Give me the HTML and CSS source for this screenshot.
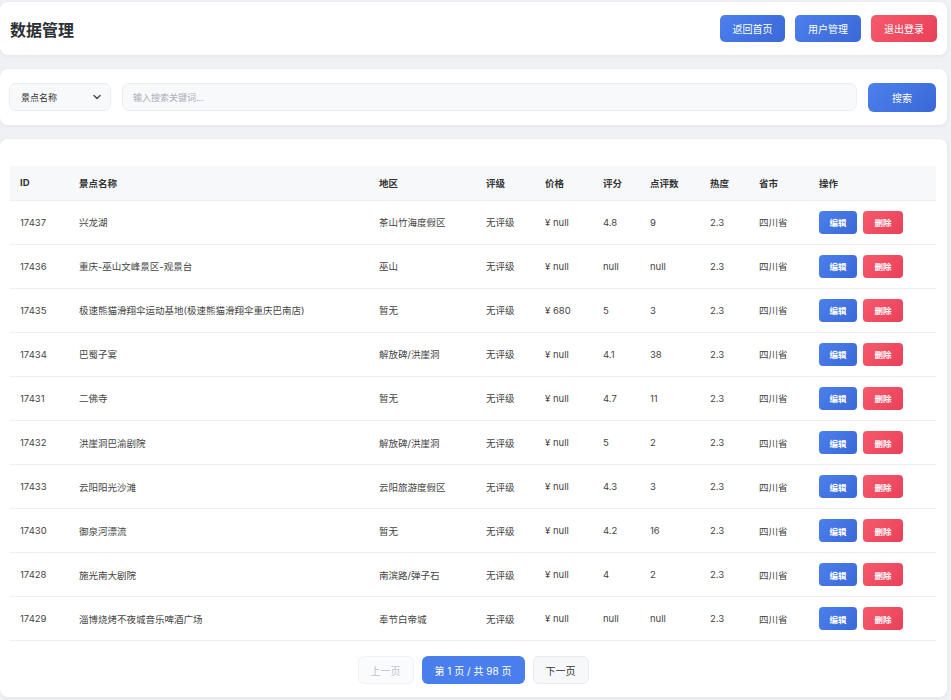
FILE: index.html
```html
<!DOCTYPE html>
<html lang="zh-CN">
<head>
<meta charset="utf-8">
<title>数据管理</title>
<link rel="stylesheet" href="styles.css">
</head>
<body>
<div class="page">
  <header class="card header">
    <h1 class="title">数据管理</h1>
    <div class="actions">
      <button class="btn btn-blue">返回首页</button>
      <button class="btn btn-blue btn-wide">用户管理</button>
      <button class="btn btn-red">退出登录</button>
    </div>
  </header>

  <section class="card search">
    <div class="select">
      <span>景点名称</span>
      <svg width="10" height="10" viewBox="0 0 10 10"><path d="M2 3.5 L5 6.5 L8 3.5" fill="none" stroke="#444" stroke-width="1.3" stroke-linecap="round" stroke-linejoin="round"/></svg>
    </div>
    <div class="input">输入搜索关键词...</div>
    <button class="btn btn-blue btn-search">搜索</button>
  </section>

  <section class="card tablecard">
    <table class="grid">
      <colgroup>
        <col style="width:59px"><col style="width:300px"><col style="width:107px"><col style="width:59px"><col style="width:58px"><col style="width:47px"><col style="width:60px"><col style="width:49px"><col style="width:60px"><col style="width:127px">
      </colgroup>
      <thead>
        <tr><th>ID</th><th>景点名称</th><th>地区</th><th>评级</th><th>价格</th><th>评分</th><th>点评数</th><th>热度</th><th>省市</th><th>操作</th></tr>
      </thead>
      <tbody>
        <tr><td>17437</td><td>兴龙湖</td><td>茶山竹海度假区</td><td>无评级</td><td>¥ null</td><td>4.8</td><td>9</td><td>2.3</td><td>四川省</td><td><span class="ops"><button class="sbtn sbtn-blue">编辑</button><button class="sbtn sbtn-red">删除</button></span></td></tr>
        <tr><td>17436</td><td>重庆-巫山文峰景区-观景台</td><td>巫山</td><td>无评级</td><td>¥ null</td><td>null</td><td>null</td><td>2.3</td><td>四川省</td><td><span class="ops"><button class="sbtn sbtn-blue">编辑</button><button class="sbtn sbtn-red">删除</button></span></td></tr>
        <tr><td>17435</td><td>极速熊猫滑翔伞运动基地(极速熊猫滑翔伞重庆巴南店)</td><td>暂无</td><td>无评级</td><td>¥ 680</td><td>5</td><td>3</td><td>2.3</td><td>四川省</td><td><span class="ops"><button class="sbtn sbtn-blue">编辑</button><button class="sbtn sbtn-red">删除</button></span></td></tr>
        <tr><td>17434</td><td>巴蜀子宴</td><td>解放碑/洪崖洞</td><td>无评级</td><td>¥ null</td><td>4.1</td><td>38</td><td>2.3</td><td>四川省</td><td><span class="ops"><button class="sbtn sbtn-blue">编辑</button><button class="sbtn sbtn-red">删除</button></span></td></tr>
        <tr><td>17431</td><td>二佛寺</td><td>暂无</td><td>无评级</td><td>¥ null</td><td>4.7</td><td>11</td><td>2.3</td><td>四川省</td><td><span class="ops"><button class="sbtn sbtn-blue">编辑</button><button class="sbtn sbtn-red">删除</button></span></td></tr>
        <tr><td>17432</td><td>洪崖洞巴渝剧院</td><td>解放碑/洪崖洞</td><td>无评级</td><td>¥ null</td><td>5</td><td>2</td><td>2.3</td><td>四川省</td><td><span class="ops"><button class="sbtn sbtn-blue">编辑</button><button class="sbtn sbtn-red">删除</button></span></td></tr>
        <tr><td>17433</td><td>云阳阳光沙滩</td><td>云阳旅游度假区</td><td>无评级</td><td>¥ null</td><td>4.3</td><td>3</td><td>2.3</td><td>四川省</td><td><span class="ops"><button class="sbtn sbtn-blue">编辑</button><button class="sbtn sbtn-red">删除</button></span></td></tr>
        <tr><td>17430</td><td>御泉河漂流</td><td>暂无</td><td>无评级</td><td>¥ null</td><td>4.2</td><td>16</td><td>2.3</td><td>四川省</td><td><span class="ops"><button class="sbtn sbtn-blue">编辑</button><button class="sbtn sbtn-red">删除</button></span></td></tr>
        <tr><td>17428</td><td>施光南大剧院</td><td>南滨路/弹子石</td><td>无评级</td><td>¥ null</td><td>4</td><td>2</td><td>2.3</td><td>四川省</td><td><span class="ops"><button class="sbtn sbtn-blue">编辑</button><button class="sbtn sbtn-red">删除</button></span></td></tr>
        <tr><td>17429</td><td>淄博烧烤不夜城音乐啤酒广场</td><td>奉节白帝城</td><td>无评级</td><td>¥ null</td><td>null</td><td>null</td><td>2.3</td><td>四川省</td><td><span class="ops"><button class="sbtn sbtn-blue">编辑</button><button class="sbtn sbtn-red">删除</button></span></td></tr>
      </tbody>
    </table>
    <nav class="pager">
      <button class="pbtn pbtn-disabled">上一页</button>
      <button class="pbtn pbtn-current">第 1 页 / 共 98 页</button>
      <button class="pbtn pbtn-next">下一页</button>
    </nav>
  </section>
</div>
</body>
</html>
```
FILE: styles.css
```css
* { box-sizing: border-box; }
html, body { margin: 0; padding: 0; }
body {
  background: #eff1f5;
  font-family: "Inter", "Noto Sans CJK SC", sans-serif;
  color: #333;
  width: 951px;
  height: 700px;
  overflow: hidden;
}
.page {
  width: 947px;
  padding-top: 2px;
  display: flex;
  flex-direction: column;
  gap: 14px;
}
.card {
  background: #fff;
  border-radius: 8px;
  box-shadow: 0 1px 4px rgba(30, 40, 70, 0.06);
}
.header {
  height: 53px;
  display: flex;
  align-items: center;
  justify-content: space-between;
  padding: 0 10px;
}
.title {
  margin: 0;
  font-size: 16px;
  font-weight: 700;
  color: #2b2f36;
}
.actions { display: flex; gap: 10px; }
.btn {
  border: none;
  font-family: inherit;
  color: #fff;
  font-size: 10px;
  border-radius: 5px;
  height: 27px;
  width: 65px;
  padding: 0;
  cursor: pointer;
}
.btn-wide { width: 66px; }
.btn-blue { background: linear-gradient(135deg, #4c80ec, #3a68d8); }
.btn-red { background: linear-gradient(135deg, #f65a6c, #e9405a); width: 66px; }

.search {
  height: 56px;
  display: flex;
  align-items: center;
  padding: 0 11px 0 9px;
}
.select {
  width: 102px;
  height: 28px;
  border: 1px solid #eceef2;
  background: #f8f9fb;
  border-radius: 7px;
  display: flex;
  align-items: center;
  justify-content: space-between;
  padding: 0 8px 0 11px;
  font-size: 9px;
  color: #333;
}
.select svg { display: block; }
.input {
  flex: 1;
  margin-left: 11px;
  height: 28px;
  border: 1px solid #eceef2;
  background: #f8f9fb;
  border-radius: 7px;
  display: flex;
  align-items: center;
  padding-left: 10px;
  font-size: 9px;
  color: #a8adb6;
}
.btn-search {
  margin-left: 11px;
  width: 68px;
  height: 29px;
  border-radius: 6px;
}

.tablecard {
  height: 558px;
  padding: 27px 11px 14px 10px;
}
.grid {
  width: 926px;
  border-collapse: collapse;
  table-layout: fixed;
  font-size: 9.5px;
}
.grid th {
  background: #f7f8fa;
  height: 34px;
  text-align: left;
  font-weight: 700;
  color: #333;
  padding: 0 0 0 10px;
  border-bottom: 1px solid #edf0f3;
}
.grid td {
  height: 44.1px;
  padding: 0 0 0 10px;
  color: #444;
  border-bottom: 1px solid #edf0f3;
  white-space: nowrap;
}
.ops { display: flex; gap: 6px; }
.sbtn {
  border: none;
  font-family: inherit;
  color: #fff;
  font-size: 8.5px;
  height: 23px;
  width: 38px;
  padding: 0;
  border-radius: 4px;
  font-weight: 600;
}
.sbtn-blue { background: linear-gradient(135deg, #4c80ec, #3a68d8); }
.sbtn-red { background: linear-gradient(135deg, #f65a6c, #e9405a); width: 40px; }

.pager {
  margin-top: 15px;
  display: flex;
  justify-content: center;
  gap: 8px;
}
.pbtn {
  font-family: inherit;
  height: 28px;
  border-radius: 6px;
  font-size: 10px;
  padding: 0;
}
.pbtn-disabled {
  width: 56px;
  background: #fafbfc;
  border: 1px solid #f0f1f4;
  color: #c0c4cb;
}
.pbtn-current {
  width: 103px;
  background: #4a7eec;
  border: none;
  color: #fff;
}
.pbtn-next {
  width: 56px;
  background: #f7f8fa;
  border: 1px solid #e9ebef;
  color: #333;
}
```
